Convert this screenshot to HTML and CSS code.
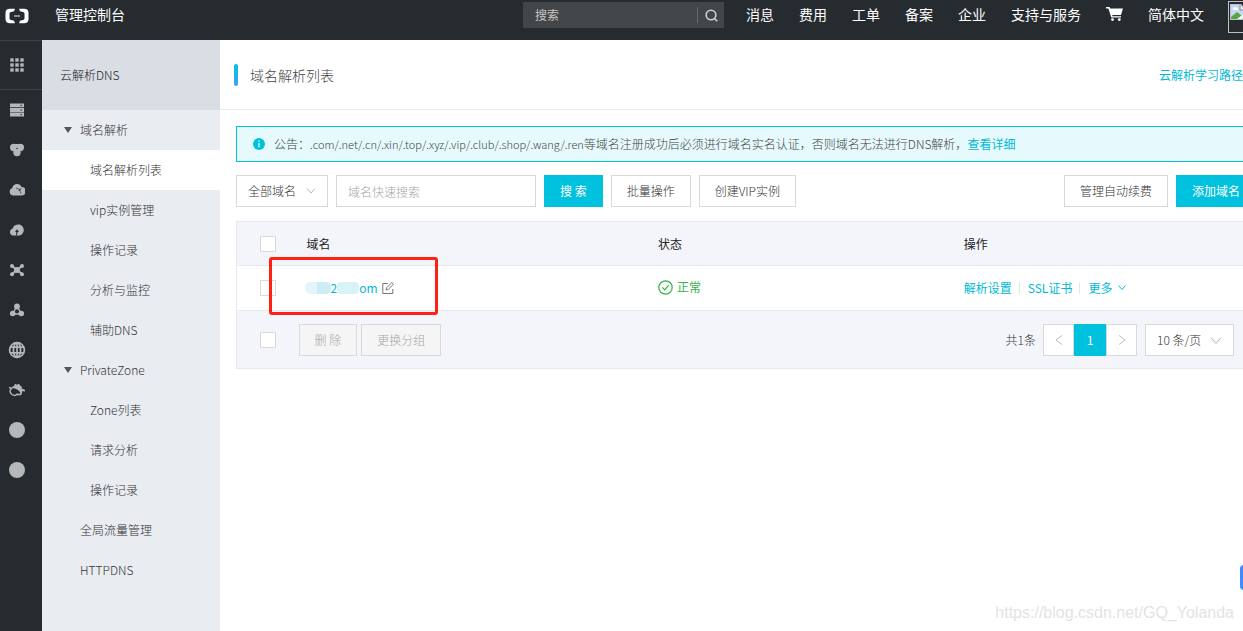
FILE: index.html
```html
<!DOCTYPE html>
<html lang="zh-CN">
<head>
<meta charset="utf-8">
<meta name="viewport" content="width=device-width, initial-scale=1">
<title>云解析DNS</title>
<link rel="stylesheet" href="styles.css">
</head>
<body>
<header class="topbar">
  <a class="logo" href="#" aria-label="首页"><svg width="24" height="16" viewBox="0 0 24 16" fill="none"><path d="M10 .8H5Q.5.8.5 5v6q0 4.200 4.500 4.200h5l-1-2.500-3-.6q-1.500-.3-1.500-1.600V5.500q0-1.300 1.500-1.600l3-.6zM14 .8h5q4.500 0 4.500 4.200v6q0 4.200-4.500 4.200h-5l1-2.500 3-.6q1.500-.3 1.500-1.600V5.500q0-1.300-1.500-1.600l-3-.6z" fill="#fff"/><path d="M9 8h6" stroke="#8a8d90" stroke-width="2"/></svg></a>
  <a class="console" href="#">管理控制台</a>
  <form class="search" role="search">
    <input class="search-input" type="search" placeholder="搜索" aria-label="搜索">
    <button class="search-btn" type="button" aria-label="搜索"><svg width="13" height="13" viewBox="0 0 13 13" fill="none" stroke="#d0d1d2" stroke-width="1.600"><circle cx="6" cy="6" r="4.800"/><path d="M9 9l3.300 3.300"/></svg></button>
  </form>
  <nav class="topnav">
    <a href="#">消息</a><a href="#">费用</a><a href="#">工单</a><a href="#">备案</a><a href="#">企业</a><a href="#">支持与服务</a>
    <a href="#" class="cart" aria-label="购物车"><svg width="17" height="14" viewBox="0 0 17 14"><path d="M0 0h3.500l.6 1.500H17L15 8H6.200l.4 1.200H15v1.400H5.300L2.400 1.500H0z" fill="#fff"/><circle cx="6.500" cy="12.600" r="1.400" fill="#fff"/><circle cx="13.300" cy="12.600" r="1.400" fill="#fff"/></svg></a>
    <a href="#">简体中文</a>
  </nav>
  <a class="avatar" href="#" aria-label="账号"><svg width="16" height="16" viewBox="0 0 16 16"><path d="M0 0h11l5 5v11H0z" fill="#b9c1ca"/><path d="M1 1h9v5h5v9H1z" fill="#c4d7f5"/><path d="M3 6a2 2 0 0 1 3-2.500A2 2 0 0 1 8 6z" fill="#fff"/><path d="M1 15v-2l6-5 5 4-4 3z" fill="#55a93c"/><path d="M7 15l8-6v3l-4 3z" fill="#fff"/><path d="M10 1v5h5" fill="#eee" stroke="#888"/></svg></a>
</header>
<div class="shell">
  <nav class="rail" aria-label="产品">
    <a class="rail-item rail-all" href="#" aria-label="全部产品"><svg width="16" height="16" viewBox="0 0 16 16"><path d="M1 1h4v4H1zM6 1h4v4H6zM11 1h4v4h-4zM1 6h4v4H1zM6 6h4v4H6zM11 6h4v4h-4zM1 11h4v4H1zM6 11h4v4H6zM11 11h4v4h-4z" stroke="#262b2f" stroke-width=".6"/></svg></a>
    <a class="rail-item" href="#" aria-label="服务器"><svg width="16" height="16" viewBox="0 0 16 16"><path d="M1 1.500h14v3.800H1zM1 6h14v3.900H1zM1 10.600h14v3.900H1z"/><path d="M11.500 3.300h1.500M11.500 8h1.500M11.500 12.700h1.500" stroke="#262b2f" stroke-width="1"/></svg></a>
    <a class="rail-item" href="#" aria-label="存储"><svg width="16" height="16" viewBox="0 0 16 16"><circle cx="4.700" cy="5.500" r="3.700"/><circle cx="11.300" cy="5.500" r="3.700"/><circle cx="8" cy="10.500" r="3.700"/><path d="M4 2h8v6H4z"/><circle cx="8" cy="6.500" r=".7" fill="#262b2f"/></svg></a>
    <a class="rail-item" href="#" aria-label="云网络"><svg width="16" height="16" viewBox="0 0 16 16"><path d="M4 13.500a3.800 3.800 0 0 1-.7-7.400A4.800 4.800 0 0 1 12.500 5 4 4 0 0 1 13 13.500z"/><path d="M7 6l5 2M12.500 6l-3 3M10.500 8l1.500 3.500" stroke="#262b2f" stroke-width=".7"/></svg></a>
    <a class="rail-item" href="#" aria-label="云上传"><svg width="16" height="16" viewBox="0 0 16 16"><path d="M4 13.500A3.600 3.600 0 0 1 3.600 6.500a5.700 5.700 0 1 1 7.400 7z"/><path d="M8 7.200L10 10H8.600l-.7 3.500H7l.3-3.500H6z" fill="#262b2f"/></svg></a>
    <a class="rail-item" href="#" aria-label="节点"><svg width="16" height="16" viewBox="0 0 16 16"><path d="M3 4l10 8M13 4L3 12" stroke="#b5b7b9" stroke-width="2"/><circle cx="8" cy="8" r="3"/><circle cx="3" cy="4" r="2"/><circle cx="13" cy="4" r="2"/><circle cx="3" cy="12.300" r="2"/><circle cx="13" cy="12.300" r="2"/></svg></a>
    <a class="rail-item" href="#" aria-label="集群"><svg width="16" height="16" viewBox="0 0 16 16"><path d="M8 4L3.500 12h9z" fill="none" stroke="#b5b7b9" stroke-width="1.400"/><circle cx="8" cy="4.500" r="2.900"/><circle cx="3.700" cy="11.500" r="2.800"/><circle cx="12.300" cy="11.500" r="2.800"/></svg></a>
    <a class="rail-item" href="#" aria-label="域名"><svg width="18" height="18" viewBox="0 0 18 18" fill="none" stroke="#b5b7b9" stroke-width="1.700"><circle cx="9" cy="9" r="7.400"/><ellipse cx="9" cy="9" rx="3.600" ry="7.400"/><path d="M9 1v16M2 6.200h14M2 11.800h14"/></svg></a>
    <a class="rail-item" href="#" aria-label="安全"><svg width="18" height="16" viewBox="0 0 18 16"><path d="M4.500 4.500L6 4l1-2.200 2 .9 2-.9 1.500 2.200 2 1-1.500 1L17 8l-3 .8-.5 2.700L10 8 7 6.500 4 6z"/><path d="M1 5.500l3.500 1M13.500 8.200l3.500.5M4 6Q0 9 4 12.500q3 2 5-.3l3.500.3q1.500-2 .5-4" fill="none" stroke="#b5b7b9" stroke-width="1.400"/></svg></a>
    <a class="rail-item" href="#" aria-label="产品"><span class="dot"></span></a>
    <a class="rail-item" href="#" aria-label="产品"><span class="dot"></span></a>
  </nav>
  <nav class="sidebar" aria-label="云解析">
    <h2 class="side-title">云解析DNS</h2>
    <a class="side-item group" href="#">域名解析</a>
    <a class="side-item sub active" href="#">域名解析列表</a>
    <a class="side-item sub" href="#">vip实例管理</a>
    <a class="side-item sub" href="#">操作记录</a>
    <a class="side-item sub" href="#">分析与监控</a>
    <a class="side-item sub" href="#">辅助DNS</a>
    <a class="side-item group" href="#">PrivateZone</a>
    <a class="side-item sub" href="#">Zone列表</a>
    <a class="side-item sub" href="#">请求分析</a>
    <a class="side-item sub" href="#">操作记录</a>
    <a class="side-item" href="#">全局流量管理</a>
    <a class="side-item" href="#">HTTPDNS</a>
  </nav>
  <main class="main">
    <div class="page-head">
      <h1 class="page-title">域名解析列表</h1>
      <a class="link" href="#">云解析学习路径</a>
    </div>
    <div class="content">
      <div class="notice">
        <svg width="12" height="12" viewBox="0 0 12 12"><circle cx="6" cy="6" r="6" fill="#00c1de"/><path d="M6 2.500v1.300M6 5v4.300" stroke="#d5f6fa" stroke-width="1.400"/></svg>
        <p class="notice-text">公告：<span class="tlds">.com/.net/.cn/.xin/.top/.xyz/.vip/.club/.shop/.wang/.ren</span>等域名注册成功后必须进行域名实名认证，否则域名无法进行DNS解析，<a class="link" href="#">查看详细</a></p>
      </div>
      <div class="toolbar">
        <span class="select-wrap"><select class="select" aria-label="域名分组"><option>全部域名</option></select><svg class="chevron" width="10" height="6" viewBox="0 0 10 6" fill="none" stroke="#b8b8b8"><path d="M1 .5l4 4.500 4-4.500"/></svg></span>
        <input class="field" type="text" placeholder="域名快速搜索" aria-label="域名快速搜索">
        <button class="btn primary" type="button">搜 索</button>
        <button class="btn" type="button">批量操作</button>
        <button class="btn" type="button">创建VIP实例</button>
        <button class="btn push" type="button">管理自动续费</button>
        <button class="btn primary" type="button">添加域名</button>
      </div>
      <div class="table-area">
        <table class="table">
          <thead>
            <tr><th class="col-check"><input class="check" type="checkbox" aria-label="全选"></th><th class="col-name">域名</th><th class="col-state">状态</th><th>操作</th></tr>
          </thead>
          <tbody>
            <tr>
              <td><input class="check" type="checkbox" aria-label="选择域名"></td>
              <td><div class="domain"><a class="link domain-link" href="#"><span class="smudge smudge-a"></span>2<span class="smudge smudge-b"></span>om</a><button class="edit" type="button" aria-label="编辑"><svg width="12" height="12" viewBox="0 0 12 12" fill="none" stroke="#777"><path d="M6 1.500H.8v10h10V7"/><path d="M4 8l.5-2.200L9.800.6l1.700 1.600-5.300 5.300z"/></svg></button></div></td>
              <td><span class="ok"><svg width="15" height="15" viewBox="0 0 15 15" fill="none" stroke="#35b34a" stroke-width="1.200"><circle cx="7.500" cy="7.500" r="6.700"/><path d="M4.300 7.300l2.400 2.500 4-4.600"/></svg>正常</span></td>
              <td><div class="ops"><a class="link" href="#">解析设置</a><a class="link" href="#">SSL证书</a><a class="link" href="#">更多 <svg width="8" height="6" viewBox="0 0 8 6" fill="none" stroke="#00c1de"><path d="M.5.500L4 4.500 7.500.5"/></svg></a></div></td>
            </tr>
          </tbody>
          <tfoot>
            <tr>
              <td><input class="check" type="checkbox" aria-label="全选"></td>
              <td colspan="3">
                <div class="foot">
                  <button class="btn" type="button" disabled>删 除</button>
                  <button class="btn" type="button" disabled>更换分组</button>
                  <span class="total">共1条</span>
                  <div class="pager">
                    <button class="page" type="button" aria-label="上一页"><svg width="8" height="10" viewBox="0 0 8 10" fill="none" stroke="#bbb"><path d="M7 .5L1 5l6 4.500"/></svg></button><button class="page current" type="button">1</button><button class="page" type="button" aria-label="下一页"><svg width="8" height="10" viewBox="0 0 8 10" fill="none" stroke="#bbb"><path d="M1 .5L7 5 1 9.500"/></svg></button>
                  </div>
                  <span class="select-wrap small"><select class="select" aria-label="每页条数"><option>10 条/页</option></select><svg class="chevron" width="12" height="8" viewBox="0 0 12 8" fill="none" stroke="#b8b8b8"><path d="M1 .5l5 6 5-6"/></svg></span>
                </div>
              </td>
            </tr>
          </tfoot>
        </table>
        <div class="marker"></div>
      </div>
    </div>
  </main>
</div>
<button class="side-tab" type="button" aria-label="咨询"></button>
<div class="watermark">https://blog.csdn.net/GQ_Yolanda</div>
</body>
</html>
```
FILE: styles.css
```css
* { box-sizing: border-box; }
body {
  position: relative;
  display: flex;
  flex-direction: column;
  min-height: 100vh;
  margin: 0;
  overflow: hidden;
  background: #fff;
  color: #333;
  font: 300 12px/18px "Noto Sans CJK SC", sans-serif;
}
a { color: inherit; text-decoration: none; }
button, input, select { margin: 0; font: inherit; color: inherit; }
h1, h2, p { margin: 0; font-weight: inherit; }
svg { display: block; flex: none; }
.link { color: #00b9d6; font-weight: 400; }

.topbar {
  display: flex;
  align-items: center;
  height: 40px;
  padding: 0 0 10px 5px;
  margin-right: -22px;
  background: #262b2f;
  color: #fff;
  font-size: 14px;
  font-weight: 400;
  white-space: nowrap;
}
.logo { padding-top: 2px; }
.console { margin-left: 26px; padding-bottom: 2px; }
.search {
  display: flex;
  width: 201px;
  height: 26px;
  margin-left: auto;
  background: #434649;
}
.search-input {
  flex: 1;
  min-width: 0;
  padding: 0 12px;
  border: 0;
  background: none;
  font-size: 12px;
}
.search-input::placeholder { color: #c6c7c8; opacity: 1; }
.search-btn {
  display: flex;
  align-items: center;
  justify-content: center;
  width: 27px;
  height: 16px;
  margin-top: 5px;
  padding: 0;
  border: 0;
  border-left: 1px solid #66696b;
  background: none;
}
.topnav {
  display: flex;
  align-items: center;
  gap: 25px;
  margin: 0 24px 0 22px;
  padding-bottom: 2px;
}
.avatar {
  width: 37px;
  height: 32px;
  margin-top: 4px;
  padding: 2px 1px;
  border: 1px solid #c0c0c0;
}

.shell { display: flex; flex: 1; }
.rail { flex: none; width: 42px; background: #262b2f; fill: #b5b7b9; }
.rail-item {
  display: flex;
  align-items: center;
  justify-content: center;
  height: 40px;
  padding-right: 8px;
}
.rail-all {
  height: 50px;
  border: solid #3d4246;
  border-width: 1px 0;
}
.dot { width: 16px; height: 16px; border-radius: 50%; background: #b5b7b9; }

.sidebar { flex: none; width: 178px; background: #e9ecf1; }
.side-title {
  padding: 26px 18px;
  background: #d9dde4;
  color: #222;
  font-size: 12px;
  line-height: 18px;
}
.side-item {
  display: flex;
  align-items: center;
  height: 40px;
  padding-left: 38px;
}
.side-item.sub { padding-left: 48px; }
.side-item.group { padding-left: 22px; }
.group::before {
  content: "";
  margin-right: 8px;
  border: solid transparent;
  border-width: 6px 4px 0;
  border-top-color: #555;
}
.side-item.active { background: #fff; }

.main { flex: 1; min-width: 0; margin-right: -13px; }
.page-head {
  display: flex;
  align-items: center;
  justify-content: space-between;
  height: 70px;
  padding: 0 13px 0 14px;
  border-bottom: 1px solid #ebebeb;
}
.page-title {
  display: flex;
  align-items: center;
  gap: 12px;
  font-size: 14px;
  color: #444;
}
.page-title::before {
  content: "";
  width: 4px;
  height: 22px;
  border-radius: 2px;
  background: linear-gradient(#00c1de, #39a5f7);
}
.content { padding: 16px 0 0 16px; }
.notice {
  display: flex;
  align-items: center;
  gap: 9px;
  height: 36px;
  padding: 0 16px;
  border: 1px solid #00c1de;
  background: #e6f9fc;
  color: #444;
  white-space: nowrap;
}
.tlds { font-size: 11px; }
.toolbar { display: flex; gap: 8px; margin: 13px 0 14px; }
.btn {
  height: 32px;
  padding: 0 15px;
  border: 1px solid #d9d9d9;
  background: #fff;
  white-space: nowrap;
}
.btn.primary { border-color: #00c1de; background: #00c1de; color: #fff; font-weight: 400; }
.btn:disabled { background: #f5f5f5; color: #a5a5a5; }
.push { margin-left: auto; }
.select-wrap { position: relative; display: block; width: 92px; }
.select-wrap.small { width: 89px; }
.select {
  width: 100%;
  height: 32px;
  padding: 0 11px;
  border: 1px solid #d9d9d9;
  border-radius: 0;
  background: #fff;
  appearance: none;
}
.chevron { position: absolute; top: 13px; right: 12px; pointer-events: none; }
.field { width: 200px; height: 32px; padding: 0 11px; border: 1px solid #d9d9d9; }
.field::placeholder { color: #a5a5a5; opacity: 1; }

.table-area { position: relative; }
.table {
  width: 100%;
  border: 1px solid #e6e9f0;
  border-collapse: collapse;
  table-layout: fixed;
}
.table th { height: 44px; padding: 0; color: #222; font-weight: 400; text-align: left; }
.table td { height: 45px; padding: 0; }
.table tr { border-bottom: 1px solid #e6e9f0; }
.table thead, .table tfoot { background: #f4f5fb; }
.table tfoot td { height: 58px; }
.col-check { width: 70px; }
.col-name { width: 34.5%; }
.col-state { width: 30%; }
.check {
  display: block;
  width: 16px;
  height: 16px;
  margin-left: 23px;
  border: 1px solid #d9d9d9;
  background: #fff;
  appearance: none;
}
.domain { display: flex; align-items: center; gap: 4px; }
.domain-link { display: flex; align-items: center; margin-left: -2px; }
.smudge { height: 12px; background: #d8f3f8; }
.smudge-a { width: 26px; border-radius: 5px; background: linear-gradient(90deg, #e5f6fa 45%, #cdedf4 45%); }
.smudge-b { width: 22px; border-radius: 4px; }
.edit { padding: 0; border: 0; background: none; }
.ok { display: flex; align-items: center; gap: 4px; padding-bottom: 2px; color: #35b34a; font-weight: 400; }
.ops { display: flex; align-items: center; }
.ops .link { display: flex; align-items: center; gap: 6px; line-height: 12px; }
.ops .link + .link { margin-left: 7px; padding-left: 8px; border-left: 1px solid #e5e5e5; }
.foot { display: flex; align-items: center; gap: 4px; margin: 0 21px 0 -8px; }
.total { margin-left: auto; margin-right: 3px; }
.pager { display: flex; margin-right: 4px; }
.page {
  display: flex;
  align-items: center;
  justify-content: center;
  width: 31px;
  height: 32px;
  padding: 0;
  border: 1px solid #d9d9d9;
  background: #fff;
}
.page.current { width: 32px; border-color: #00c1de; background: #00c1de; color: #fff; font-weight: 400; }
.marker {
  position: absolute;
  top: 36px;
  left: 33px;
  width: 169px;
  height: 58px;
  border: 3px solid #ff2015;
  border-radius: 3px;
  pointer-events: none;
}
.side-tab {
  position: absolute;
  right: -22px;
  bottom: 41px;
  width: 25px;
  height: 25px;
  padding: 0;
  border: 0;
  border-radius: 4px;
  background: #3d8bff;
}
.watermark {
  position: absolute;
  right: 9px;
  bottom: 9px;
  color: #e3e3e3;
  font: 16px/18px "Liberation Sans", Arial, sans-serif;
}
```
